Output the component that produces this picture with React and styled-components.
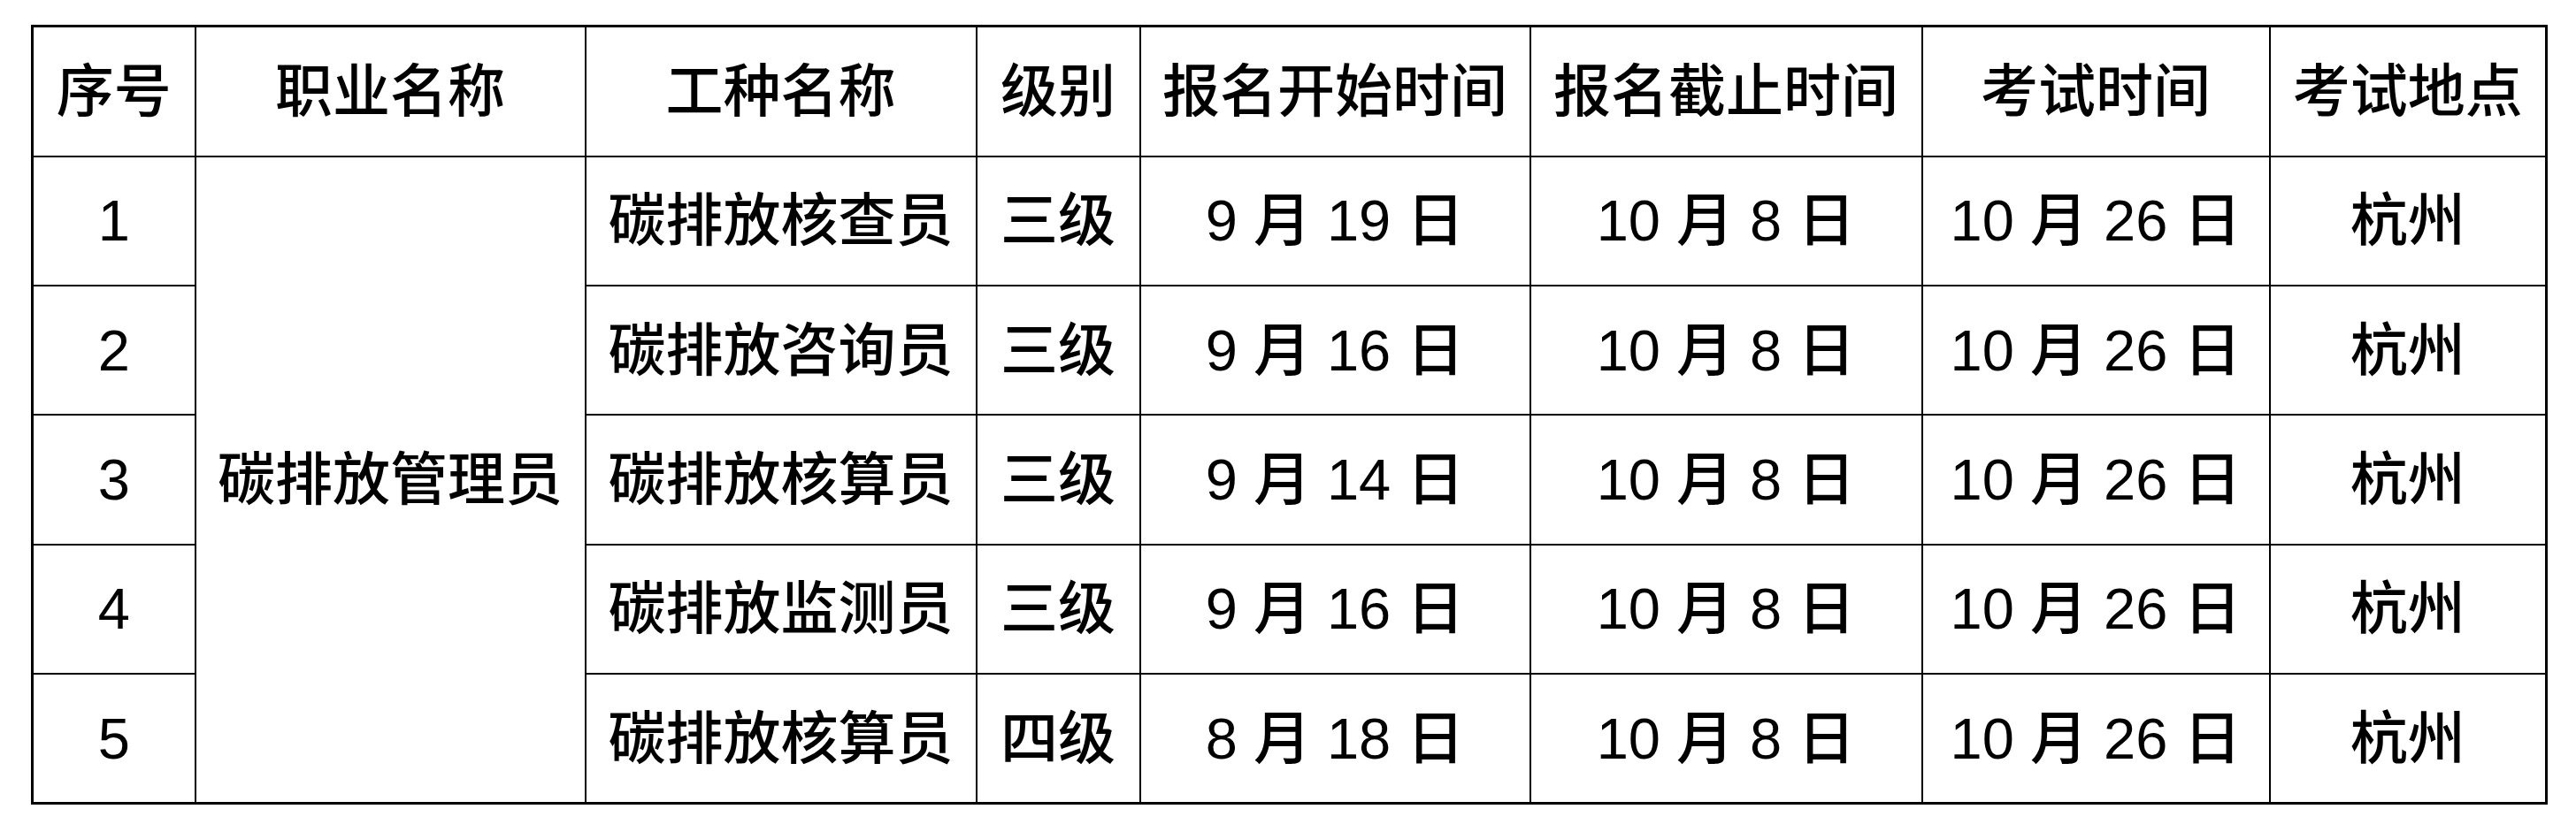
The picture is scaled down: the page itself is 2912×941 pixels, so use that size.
import React from "react";
import styled, { createGlobalStyle } from "styled-components";

const GlobalStyle = createGlobalStyle`
    html, body {
        margin: 0;
        padding: 0;
        background: #ffffff;
    }
    body {
        font-family: "Liberation Sans", "Noto Sans CJK SC", sans-serif;
        color: #000000;
    }
`;

const Page = styled.div`
    padding: 28px 0 0 35px;
`;

const Table = styled.table`
    width: 2842px;
    table-layout: fixed;
    border-collapse: collapse;
    border: 3px solid #000;
    font-size: 65px;
    font-weight: 500;
    line-height: 1;
`;

const Row = styled.tr`
    height: ${(p) => (p.$head ? 147 : 146.4)}px;
`;

const HeadCell = styled.th`
    border: 2px solid #000;
    font-weight: 500;
    text-align: center;
    vertical-align: middle;
    padding: 0;
    white-space: nowrap;
`;

const Cell = styled.td`
    border: 2px solid #000;
    text-align: center;
    vertical-align: middle;
    padding: 0;
    white-space: nowrap;
`;

const columns = [
    { title: "序号", width: 184 },
    { title: "职业名称", width: 441 },
    { title: "工种名称", width: 442 },
    { title: "级别", width: 185 },
    { title: "报名开始时间", width: 441 },
    { title: "报名截止时间", width: 443 },
    { title: "考试时间", width: 393 },
    { title: "考试地点", width: 313 },
];

const rows = [
    { no: "1", job: "碳排放核查员", level: "三级", start: "9 月 19 日" },
    { no: "2", job: "碳排放咨询员", level: "三级", start: "9 月 16 日" },
    { no: "3", job: "碳排放核算员", level: "三级", start: "9 月 14 日" },
    { no: "4", job: "碳排放监测员", level: "三级", start: "9 月 16 日" },
    { no: "5", job: "碳排放核算员", level: "四级", start: "8 月 18 日" },
];

const App = () => {
    return (
        <Page>
            <GlobalStyle />
            <Table>
                <colgroup>
                    {columns.map((c) => (
                        <col key={c.title} style={{ width: c.width }} />
                    ))}
                </colgroup>
                <thead>
                    <Row $head>
                        {columns.map((c) => (
                            <HeadCell key={c.title}>{c.title}</HeadCell>
                        ))}
                    </Row>
                </thead>
                <tbody>
                    {rows.map((r, i) => (
                        <Row key={r.no}>
                            <Cell>{r.no}</Cell>
                            {i === 0 && <Cell rowSpan={rows.length}>碳排放管理员</Cell>}
                            <Cell>{r.job}</Cell>
                            <Cell>{r.level}</Cell>
                            <Cell>{r.start}</Cell>
                            <Cell>10 月 8 日</Cell>
                            <Cell>10 月 26 日</Cell>
                            <Cell>杭州</Cell>
                        </Row>
                    ))}
                </tbody>
            </Table>
        </Page>
    );
};

export default App;
